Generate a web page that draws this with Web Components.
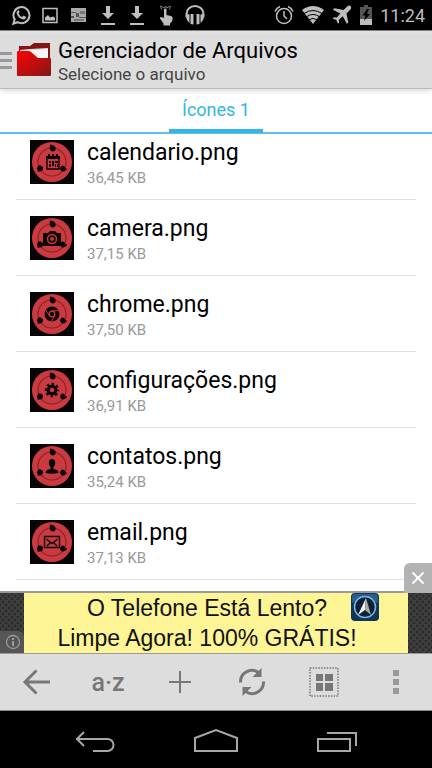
<!DOCTYPE html>
<html lang="pt-BR">
<head>
<meta charset="utf-8">
<meta name="viewport" content="width=device-width, initial-scale=1">
<title>Gerenciador de Arquivos</title>
<style>
  body {
    --accent: #33b5e5;
    --bar: #dddddd;
    --icon: #777777;
    margin: 0;
    background: #fff;
    color: #000;
    font-family: Roboto, "Noto Sans", sans-serif;
  }
</style>
</head>
<body>
<app-screen>
  <status-bar slot="top" time="11:24"></status-bar>
  <app-header slot="top">
    Gerenciador de Arquivos
    <span slot="subtitle">Selecione o arquivo</span>
  </app-header>
  <tab-strip slot="top">Ícones 1</tab-strip>

  <file-item icon="calendar" size="36,45 KB">calendario.png</file-item>
  <file-item icon="camera" size="37,15 KB">camera.png</file-item>
  <file-item icon="chrome" size="37,50 KB">chrome.png</file-item>
  <file-item icon="gear" size="36,91 KB">configurações.png</file-item>
  <file-item icon="person" size="35,24 KB">contatos.png</file-item>
  <file-item icon="mail" size="37,13 KB">email.png</file-item>

  <ad-banner slot="bottom">
    <span>O Telefone Está Lento?</span>
    <span>Limpe Agora! 100% GRÁTIS!</span>
  </ad-banner>
  <tool-bar slot="bottom"></tool-bar>
  <nav-bar slot="bottom"></nav-bar>
</app-screen>

<script>
function define(name, html, setup) {
  const template = document.createElement('template');
  template.innerHTML = html;
  customElements.define(name, class extends HTMLElement {
    constructor() {
      super();
      this.attachShadow({ mode: 'open' });
      this.shadowRoot.appendChild(template.content.cloneNode(true));
    }
    connectedCallback() {
      if (setup) setup(this, this.shadowRoot);
    }
  });
}

define('app-screen', `
  <style>
    :host { display: flex; flex-direction: column; height: 100vh; }
    main {
      flex: 1;
      min-height: 0;
      overflow-y: auto;
      scrollbar-width: none;
      padding: 0 16px;
    }
    /* list is scrolled a little under the tabs */
    .list { margin-top: -10px; }
  </style>
  <slot name="top"></slot>
  <main><div class="list"><slot></slot></div></main>
  <slot name="bottom"></slot>
`);

// --- Status bar ---

const DOWNLOAD = `
  <svg width="20" height="22" viewBox="0 0 20 22"><path d="M8 2h4v7h4l-6 6-6-6h4z"/><path d="M3 19h14v2H3z"/></svg>`;

define('status-bar', `
  <style>
    :host {
      display: flex;
      justify-content: space-between;
      align-items: center;
      height: 30px;
      padding: 0 7px 0 11px;
      background: #000;
      border-bottom: 1px solid #888;
      color: #bebebe;
      font-size: 18px;
    }
    div { display: flex; align-items: center; }
    .left { gap: 9px; }
    .right { gap: 7px; }
    svg { fill: #bebebe; display: block; }
    .line { fill: none; stroke: #bebebe; stroke-width: 2; }
    .thin { fill: none; stroke: #bebebe; stroke-width: 1.500; }
  </style>
  <div class="left">
    <svg width="20" height="22" viewBox="0 0 20 22">
      <path class="line" d="M2.400 19.600l1.300-4.200a8 8 0 1 1 3 2.800z"/>
      <path d="M7 6.500c-1.500.8-1.800 2.300-1 4 1.200 2.500 3.200 4.300 6 5 1.700.3 3-.8 3.200-2.500l-2.700-1.400-1.300 1.500c-1.700-.7-2.900-1.900-3.700-3.500l1.100-1.300-1-2.200z"/>
    </svg>
    <svg width="20" height="22" viewBox="0 0 20 22">
      <path class="thin" d="M3 4.500h14v14H3z"/><path d="M5 16.500v-3l3-2.500 2 2.500 3-1 2 1.500v2.500z"/>
    </svg>
    <svg width="20" height="22" viewBox="0 0 20 22">
      <path fill="#aaa" d="M2 4h15v14H2z"/><path fill="#555" d="M2 8h5v1H2zM2 12h3v2H2zM7 9h3v4H7zM10 13h7v1h-7z"/><path fill="#777" d="M11 7h5v3h-5zM5 15h10v2H5z"/>
    </svg>
    ${DOWNLOAD}
    ${DOWNLOAD}
    <svg width="20" height="22" viewBox="0 0 20 22">
      <path d="M8 5q1.500-1 2.500 0v6l4.500 1q2 .5 1.700 2.500l-.7 3-2 2v2H7.500v-2L4 14.500q-.5-1.500 1-1.500L8 14z"/>
      <path fill="none" stroke="#777" d="M5.500 5.500l-1-3.500 4 2 1-2 1 2 4-2-1 3.500"/>
    </svg>
    <svg width="20" height="22" viewBox="0 0 20 22">
      <path class="line" d="M1.500 13V10a8.500 8 0 0 1 17 0v3"/>
      <path d="M1 10l3.500.5v8.500Q.5 16 1 10zM19 10l-3.500.5v8.500q4-3 3.500-9zM5.500 10h3v10.500l-3-.5zM11.500 10h3v10l-3 .5z"/>
    </svg>
  </div>
  <div class="right">
    <svg width="20" height="22" viewBox="0 0 20 22">
      <circle class="thin" cx="10" cy="12" r="7.500"/>
      <path class="thin" d="M10 7v5l3 3M1 7.500Q2.500 4 6 2.500M19 7.500Q17.500 4 14 2.500"/>
    </svg>
    <svg width="24" height="20" viewBox="0 0 24 20">
      <path d="M12 19L1 5q11-8 22 0z"/>
      <path fill="none" stroke="#000" d="M3 8.500q9-6 18 0M5.500 11.700q6.500-4.500 13 0M8 14.800q4-2.800 8 0"/>
    </svg>
    <svg width="20" height="20" viewBox="0 0 20 20">
      <path d="M18.500 1q1.500 1.800-.3 3.700l-3.700 3.700 1.800 9.100-1.500 1.300-4-7.500-4 3.500.3 3-1.200 1-1.600-3.700L.8 13.500l1-1.200 3.100.2 3.400-4L1 4.800l1.400-1.500 9.200 1.600 3.500-3.500Q17-.3 18.500 1z"/>
    </svg>
    <svg width="14" height="20" viewBox="0 0 14 20">
      <path fill="#555" d="M5 0h4v2h4v18H1V2h4z"/><path d="M1 14h12v6H1z"/>
      <path fill="#000" d="M8 4L3.500 10.500h3L5 16l6-7H8l2-5z"/>
    </svg>
    <time></time>
  </div>
`, (el, root) => {
  root.querySelector('time').textContent = el.getAttribute('time');
});

// --- Header and tabs ---

define('app-header', `
  <style>
    :host {
      display: block;
      position: relative;
      z-index: 1;
      background: linear-gradient(#e2e2e2, var(--bar) 8%);
      border-bottom: 1px solid #bbb;
      box-shadow: 0 1px 6px rgba(0, 0, 0, 0.2);
    }
    header { display: flex; align-items: center; height: 57px; }
    button {
      display: flex;
      align-items: center;
      gap: 4px;
      padding: 0;
      border: 0;
      background: none;
    }
    h1 { margin: 0; font-size: 22px; line-height: 26px; font-weight: 400; }
    p { margin: 0; font-size: 17px; line-height: 20px; color: #444; }
    .titles { margin-left: 6px; padding-top: 2px; }
  </style>
  <header>
    <button aria-label="Menu">
      <svg width="12" height="20" viewBox="0 0 12 20"><path fill="#999" d="M0 2h12v3H0zM0 9h12v3H0zM0 16h12v3H0z"/></svg>
      <svg width="36" height="36" viewBox="0 0 36 36">
        <defs>
          <linearGradient id="red" x1="0" y1="0" x2="1" y2="1"><stop offset=".1" stop-color="#f40404"/><stop offset="1" stop-color="#801818"/></linearGradient>
        </defs>
        <path fill="#851414" d="M3 4h11l4-3h16v17H3z"/>
        <path fill="#ddd" d="M4 8l10-1 18-1v11H5z"/><path fill="#f5f5f5" d="M5 9l27-2v10H5z"/>
        <path fill="url(#red)" d="M1 10q0-1 1-1h11q1 0 2 1l7 6h12q1 0 1 1v16q0 1-1 1H2q-1 0-1-1z"/>
      </svg>
    </button>
    <div class="titles">
      <h1><slot></slot></h1>
      <p><slot name="subtitle"></slot></p>
    </div>
  </header>
`);

define('tab-strip', `
  <style>
    :host { display: block; background: #fff; border-bottom: 2px solid #5cc4ea; }
    nav { display: flex; justify-content: center; }
    a {
      padding: 2px 13px 0;
      border-bottom: 4px solid var(--accent);
      margin-bottom: -1px;
      color: var(--accent);
      font-size: 18px;
      line-height: 38px;
      text-decoration: none;
    }
  </style>
  <nav><a href="#icones"><slot></slot></a></nav>
`);

// --- Files ---

const GLYPHS = {
  calendar: `
    <path d="M16 16h14v3H16z"/><path d="M18 14h2v3h-2zM22 14h2v3h-2zM26 14h2v3h-2z"/>
    <path class="s" d="M17 18h12v11H17z"/><path d="M19 21h2v2h-2zM22 21h2v5h-2zM25 21h3v2h-3zM19 24h2v3h-2zM25 24h1v3h-1zM27 24h1v3h-1z"/>`,
  camera: `
    <path d="M13 17h5l2-2h5l2 2h4v13H13z"/>
    <circle cx="22" cy="23" r="4.500" fill="none" stroke="#c8353b" stroke-width="1.500"/><circle cx="22" cy="23" r="2" fill="#c8353b"/>`,
  chrome: `
    <circle cx="22" cy="22" r="7.500"/><circle cx="22" cy="22" r="2.800" fill="none" stroke="#c8353b" stroke-width="1.300"/>
    <path d="M22 18.800h7M19.300 23.700l-4-6M24.600 23.800l-3.500 6" fill="none" stroke="#c8353b"/>`,
  gear: `
    <circle cx="22" cy="22" r="3.800" fill="none" stroke="#0c0607" stroke-width="3"/>
    <circle cx="22" cy="22" r="6" fill="none" stroke="#0c0607" stroke-width="2.600" stroke-dasharray="2.500 2.212" stroke-dashoffset="1.250"/>`,
  person: `
    <ellipse cx="22" cy="19" rx="3.200" ry="4"/><path d="M20.500 22h3v3q5 .5 5 4-6.500 1.500-13 0 0-3.500 5-4z"/>`,
  mail: `
    <path class="s" d="M14.500 16.500h15v11h-15zM16.500 19l5.500 4.500 5.500-4.500M17 26l3-3M27 26l-3-3"/>`,
};

define('file-item', `
  <style>
    :host { display: block; border-bottom: 1px solid #e2e2e2; }
    a {
      display: flex;
      align-items: center;
      gap: 13px;
      height: 75px;
      padding: 0 14px;
      color: inherit;
      text-decoration: none;
    }
    svg { flex: none; fill: #0c0607; }
    .s { fill: none; stroke: #0c0607; stroke-width: 1.400; }
    .text { display: grid; padding-top: 2px; }
    .name { font-size: 23px; line-height: 30px; }
    .size { font-size: 15px; line-height: 20px; color: #999; }
  </style>
  <a href="#">
    <svg width="44" height="44" viewBox="0 0 44 44">
      <path d="M0 0h44v44H0z" fill="#060405"/>
      <circle cx="22" cy="22" r="20" fill="#cb3a40"/>
      <circle cx="22" cy="22" r="14" fill="none" stroke="#852329" stroke-width="1.200"/>
      <path d="M22 5q-1.500.3-2 2.200a3 3 0 1 0 5.500.1Q24.800 5.500 22 5zM22.500 6q-2-.5-1-2.500-2 1-2 4z"/>
      <path d="M11 25.500a3 3 0 1 0 2 3.500q.3-1.500-.5-3l-.5 1zM7.500 29l.3 3 3-1z"/>
      <path d="M33 25.500a3 3 0 1 0 2.300 5q1.500-.7 2-2l-1.500.2q-.8-3-2.800-3.200z"/>
      <g class="glyph"></g>
    </svg>
    <span class="text">
      <span class="name"><slot></slot></span>
      <span class="size"></span>
    </span>
  </a>
`, (el, root) => {
  root.querySelector('.glyph').innerHTML = GLYPHS[el.getAttribute('icon')];
  root.querySelector('.size').textContent = el.getAttribute('size');
});

// --- Ad ---

define('ad-banner', `
  <style>
    :host {
      display: block;
      position: relative;
      padding: 0 24px;
      border-top: 2px solid #999;
      border-bottom: 1px solid #999;
      background:
        radial-gradient(circle, #2c2c2c 1px, transparent 2px) 0 0 / 6px 6px,
        radial-gradient(circle, #2c2c2c 1px, #404040 2px) 3px 3px / 6px 6px;
    }
    .ad {
      display: grid;
      align-content: center;
      justify-items: center;
      height: 60px;
      padding-right: 18px;
      background: #fef596;
      color: #111;
      font-family: "Liberation Sans Narrow", "Liberation Sans", sans-serif;
      font-size: 23px;
      line-height: 30px;
      white-space: nowrap;
      text-decoration: none;
    }
    .app { position: absolute; right: 53px; top: 0; }
    .info { position: absolute; left: 0; bottom: 0; }
    button {
      position: absolute;
      right: 0;
      bottom: 100%;
      display: grid;
      place-items: center;
      width: 28px;
      height: 30px;
      padding: 0;
      border: 0;
      border-radius: 6px 0 0 0;
      background: #b3b3b3;
    }
  </style>
  <a class="ad" href="#"><slot></slot></a>
  <svg class="app" width="28" height="28" viewBox="0 0 28 28">
    <rect width="28" height="28" rx="4" fill="#123456"/><path fill="#2a5c88" d="M4 1h20q3 0 3 3v6Q14 4 1 10V4q0-3 3-3z"/>
    <circle cx="14" cy="14" r="10.500" fill="#0c2036" stroke="#70b8e8" stroke-width="1.500"/>
    <path fill="#f4f4f4" d="M15 5L7 22l7-5z"/><path fill="#aaa" d="M15 5l5 17-6-5z"/>
  </svg>
  <svg class="info" width="24" height="22" viewBox="0 0 24 22">
    <path fill="#555" d="M0 0h18q6 0 6 6v16H0z"/>
    <circle cx="13" cy="11" r="6.500" fill="none" stroke="#999" stroke-width="1.300"/><path fill="#999" d="M12 7h2v2h-2zM12 10h2v5h-2z"/>
  </svg>
  <button aria-label="Fechar">
    <svg width="14" height="14" viewBox="0 0 14 14"><path d="M1.500 1.500l11 11M12.500 1.500l-11 11" stroke="#fff" stroke-width="2"/></svg>
  </button>
`);

// --- Bottom bars ---

define('tool-bar', `
  <style>
    :host { display: block; background: var(--bar); border-bottom: 1px solid #888; }
    nav { display: grid; grid-template-columns: repeat(6, 1fr); height: 56px; }
    button {
      display: grid;
      place-items: center;
      padding: 0;
      border: 0;
      background: none;
      color: var(--icon);
      font: 500 25px Roboto, sans-serif;
    }
    svg { fill: none; stroke: currentColor; }
  </style>
  <nav>
    <button aria-label="Voltar">
      <svg width="28" height="28" viewBox="0 0 28 28" stroke-width="3"><path d="M28 14H3M14.500 2.500L3 14l11.500 11.500"/></svg>
    </button>
    <button>a·z</button>
    <button aria-label="Adicionar">
      <svg width="22" height="22" viewBox="0 0 22 22" stroke-width="2"><path d="M11 0v22M0 11h22"/></svg>
    </button>
    <button aria-label="Atualizar">
      <svg width="28" height="28" viewBox="0 0 28 28" stroke-width="3">
        <path d="M2.500 14.500A11.500 11.500 0 0 1 20.500 4.500M25.500 13.500A11.500 11.500 0 0 1 7.500 23.500"/>
        <path stroke="none" fill="currentColor" d="M23.500 0v9h-9zM4.500 28v-9h9z"/>
      </svg>
    </button>
    <button aria-label="Selecionar">
      <svg width="30" height="30" viewBox="0 0 30 30">
        <path d="M1 1h28v28H1z" stroke-width="1.500" stroke-dasharray="1.500 1.300"/>
        <path stroke="none" fill="currentColor" d="M7 7h7v7H7zM16 7h8v7h-8zM7 16h7v8H7zM16 16h8v8h-8z"/>
      </svg>
    </button>
    <button aria-label="Mais">
      <svg width="6" height="24" viewBox="0 0 6 24"><path stroke="none" fill="#999" d="M0 0h6v6H0zM0 9h6v6H0zM0 18h6v6H0z"/></svg>
    </button>
  </nav>
`);

define('nav-bar', `
  <style>
    :host { display: block; background: #000; }
    nav {
      display: grid;
      grid-template-columns: repeat(3, 1fr);
      height: 57px;
      padding: 0 8%;
    }
    button { display: grid; place-items: center; padding: 0; border: 0; background: none; }
    svg { fill: none; stroke: #a8a8a8; stroke-width: 2; }
  </style>
  <nav>
    <button aria-label="Voltar">
      <svg width="40" height="24" viewBox="0 0 40 24"><path d="M1 11h31.500a6 6 0 0 1 0 12H18M9 4l-7 7 7 7"/></svg>
    </button>
    <button aria-label="Início">
      <svg width="44" height="24" viewBox="0 0 44 24"><path d="M1 23V10l21-8 21 8v13z"/></svg>
    </button>
    <button aria-label="Recentes">
      <svg width="42" height="24" viewBox="0 0 42 24"><path d="M2 11h32v12H2zM11 5h29v13"/></svg>
    </button>
  </nav>
`);
</script>
</body>
</html>
